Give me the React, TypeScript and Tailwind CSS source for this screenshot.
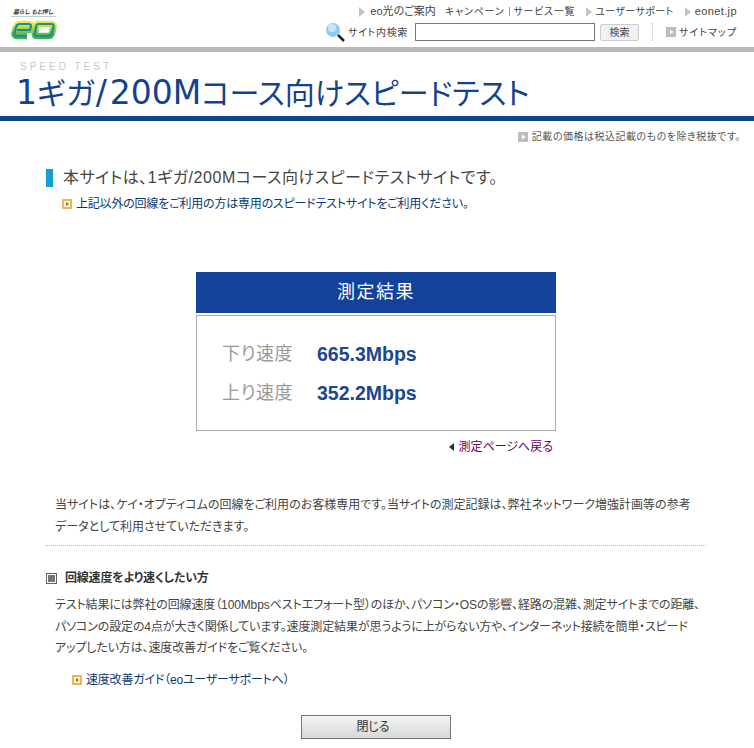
const jp = "font-['Liberation_Sans','Noto_Sans_CJK_JP',sans-serif] [font-feature-settings:'palt']";

function Bullet({ className = "" }: { className?: string }) {
  return (
    <svg width="10" height="10" viewBox="0 0 10 10" className={"shrink-0 " + className}>
      <rect x="0" y="0" width="10" height="10" fill="#e8b85a" />
      <rect x="2" y="2" width="6" height="6" fill="#fff3d6" />
      <path d="M4 3 L7 5 L4 7 Z" fill="#b06a10" />
    </svg>
  );
}

function GrayBullet() {
  return (
    <svg width="10" height="10" viewBox="0 0 10 10" className="shrink-0">
      <rect width="10" height="10" fill="#bdbdbd" />
      <path d="M4 2.5 L7.5 5 L4 7.5 Z" fill="#fff" />
    </svg>
  );
}

function Tri() {
  return (
    <svg width="6" height="10" viewBox="0 0 6 10" className="shrink-0">
      <path d="M0 0 L6 5 L0 10 Z" fill="#c4c4c4" />
    </svg>
  );
}

export default function App() {
  return (
    <div className={"relative w-[754px] h-[748px] overflow-hidden bg-white text-[#333] " + jp}>
      <header className="flex h-[47px] justify-between">
        <div className="pl-[11px] pt-[8px]">
          <div className="w-[45px] whitespace-nowrap border-b border-[#bcd] pl-[2px] text-[6px] font-bold italic leading-[8px] text-[#444]">暮らし もと押し</div>
          <svg width="46" height="20" viewBox="0 0 46 20" className="mt-[3px] block">
            <defs>
              <linearGradient id="g" x1="0" y1="0" x2="0" y2="1">
                <stop offset="0" stopColor="#e4ea4a" />
                <stop offset="1" stopColor="#46b04a" />
              </linearGradient>
            </defs>
            <g fill="none" strokeLinejoin="round">
              <path d="M6 10 H19 L20 6 Q20 4 17 4 H9 Q6 4 5 7 L3.5 13 Q3 16 6 16 H16" stroke="url(#g)" strokeWidth="6.5" />
              <path d="M27 4 H41 Q43 4 42.5 7 L41 13 Q40 16 37 16 H26 Q23 16 24 13 L25 7 Q25.5 4 27 4 Z" stroke="url(#g)" strokeWidth="6.5" />
              <path d="M6 10 H19 L20 6 Q20 4 17 4 H9 Q6 4 5 7 L3.5 13 Q3 16 6 16 H16" stroke="#1a8d9a" strokeWidth="2.2" />
              <path d="M27 4 H41 Q43 4 42.5 7 L41 13 Q40 16 37 16 H26 Q23 16 24 13 L25 7 Q25.5 4 27 4 Z" stroke="#1a8d9a" strokeWidth="2.2" />
            </g>
          </svg>
        </div>
        <div className="flex flex-col items-end pr-[17px] pt-[4px]">
          <nav className="flex h-[15px] items-center text-[10px] leading-[15px] text-[#444] whitespace-nowrap">
            <Tri />
            <span className="ml-[5px] text-[11px]">eo光のご案内</span>
            <span className="ml-[9px] tracking-[0.8px]">キャンペーン</span>
            <span className="mx-[4px] h-[9px] border-l border-[#999]" />
            <span className="tracking-[0.7px]">サービス一覧</span>
            <span className="ml-[11px]"><Tri /></span>
            <span className="ml-[3px] tracking-[0.4px]">ユーザーサポート</span>
            <span className="ml-[11px]"><Tri /></span>
            <span className="ml-[4px] text-[11px] tracking-[0.4px]">eonet.jp</span>
          </nav>
          <div className="mt-[3px] flex items-center text-[10px] text-[#444] whitespace-nowrap">
            <svg width="20" height="20" viewBox="0 0 20 20" className="mr-[3px]">
              <circle cx="8" cy="8" r="7" fill="#8fcbf2" />
              <circle cx="7" cy="6" r="4" fill="#c6e6fa" />
              <path d="M13 13 L19 19" stroke="#222" strokeWidth="2.5" />
            </svg>
            <span className="tracking-[0.7px]">サイト内検索</span>
            <div className="ml-[7px] h-[18px] w-[180px] border border-[#777] bg-white" />
            <div className="ml-[5px] flex h-[17px] w-[39px] items-center justify-center rounded-[2px] border border-[#ccc] bg-[#f2f2f2] text-[10px]">検索</div>
            <div className="mx-[13px] h-[18px] border-l border-dotted border-[#bbb]" />
            <GrayBullet />
            <span className="ml-[3px] tracking-[1px]">サイトマップ</span>
          </div>
        </div>
      </header>
      <div className="h-[5px] bg-[#b9b9b9]" />
      <div className="h-[64px] pl-[20px] pt-[8px]">
        <div className="text-[10px] leading-[13px] tracking-[3px] text-[#c8c8c8]">SPEED TEST</div>
        <h1 className="-ml-[4px] mt-[1px] text-[30px] leading-[38px] text-[#14428f] whitespace-nowrap">
          <span className="font-['DejaVu_Sans','Noto_Sans_CJK_JP',sans-serif] text-[33px]">1</span>
          <span className="tracking-[1px]">ギガ</span>
          <span className="font-['DejaVu_Sans','Noto_Sans_CJK_JP',sans-serif] text-[33px] tracking-[3px]">/</span>
          <span className="font-['DejaVu_Sans','Noto_Sans_CJK_JP',sans-serif] text-[33px]">200M</span>
          <span>コース向けスピードテスト</span>
        </h1>
      </div>
      <div className="h-[5px] bg-[#13428f]" />
      <div className="flex items-center justify-end gap-[4px] pr-[13px] pt-[9px] text-[10px] leading-[14px] tracking-[0.5px] text-[#555]">
        <GrayBullet />
        <span>記載の価格は税込記載のものを除き税抜です。</span>
      </div>
      <div className="mt-[25px] ml-[46px] flex h-[18px] items-center border-l-[7px] border-[#12a0d0] pl-[10px] text-[16px] tracking-[0.55px] text-[#444] whitespace-nowrap">
        本サイトは、1ギガ/200Mコース向けスピードテストサイトです。
      </div>
      <div className="mt-[9px] ml-[62px] flex items-center gap-[4px] text-[12px] leading-[16px] tracking-[-0.2px] text-[#0b3a73] whitespace-nowrap">
        <Bullet />
        <span>上記以外の回線をご利用の方は専用のスピードテストサイトをご利用ください。</span>
      </div>
      <section className="ml-[196px] mt-[60px] w-[360px]">
        <div className="flex h-[41px] items-center justify-center bg-[#124299] text-[18px] tracking-[1.5px] text-white">測定結果</div>
        <div className="mt-[2px] h-[116px] border border-[#aaa] pl-[25px] pt-[19px]">
          <div className="flex h-[39px] items-center">
            <span className="w-[95px] text-[18px] tracking-[0.5px] text-[#999]">下り速度</span>
            <span className="text-[19.5px] font-bold text-[#1c4690]">665.3Mbps</span>
          </div>
          <div className="flex h-[39px] items-center">
            <span className="w-[95px] text-[18px] tracking-[0.5px] text-[#999]">上り速度</span>
            <span className="text-[19.5px] font-bold text-[#1c4690]">352.2Mbps</span>
          </div>
        </div>
        <div className="mt-[8px] flex items-center justify-end gap-[5px] pr-[3px] text-[12px] leading-[16px] text-[#660066]">
          <svg width="5" height="8" viewBox="0 0 5 8"><path d="M5 0 L0 4 L5 8 Z" fill="#333" /></svg>
          <span>測定ページへ戻る</span>
        </div>
      </section>
      <p className="ml-[55px] mt-[39px] whitespace-nowrap text-[12px] leading-[22px] text-[#444]">
        当サイトは、ケイ・オプティコムの回線をご利用のお客様専用です。当サイトの測定記録は、弊社ネットワーク増強計画等の参考<br />データとして利用させていただきます。
      </p>
      <div className="ml-[46px] mt-[7px] w-[660px] border-t border-dotted border-[#bbb]" />
      <h2 className="ml-[46px] mt-[23px] flex items-center text-[12px] font-bold leading-[18px] tracking-[-0.2px] text-[#333]">
        <span className="mr-[8px] flex h-[11px] w-[11px] items-center justify-center border border-[#666]"><span className="h-[7px] w-[7px] bg-[#777]" /></span>
        回線速度をより速くしたい方
      </h2>
      <p className="ml-[55px] mt-[8px] whitespace-nowrap text-[12px] leading-[21.5px] tracking-[-0.13px] text-[#444]">
        テスト結果には弊社の回線速度（100Mbpsベストエフォート型）のほか、パソコン・OSの影響、経路の混雑、測定サイトまでの距離、<br />パソコンの設定の4点が大きく関係しています。速度測定結果が思うように上がらない方や、インターネット接続を簡単・スピード<br />アップしたい方は、速度改善ガイドをご覧ください。
      </p>
      <div className="ml-[72px] mt-[12px] flex items-center gap-[4px] text-[12px] leading-[16px] tracking-[-0.2px] text-[#0b3a73] whitespace-nowrap">
        <Bullet />
        <span>速度改善ガイド（eoユーザーサポートへ）</span>
      </div>
      <div className="ml-[301px] mt-[27px] flex h-[24px] w-[150px] items-center justify-center border border-[#777] bg-gradient-to-b from-[#f4f4f4] to-[#d8d8d8] pr-[6px] text-[12px] text-[#333]">閉じる</div>
    </div>
  );
}
